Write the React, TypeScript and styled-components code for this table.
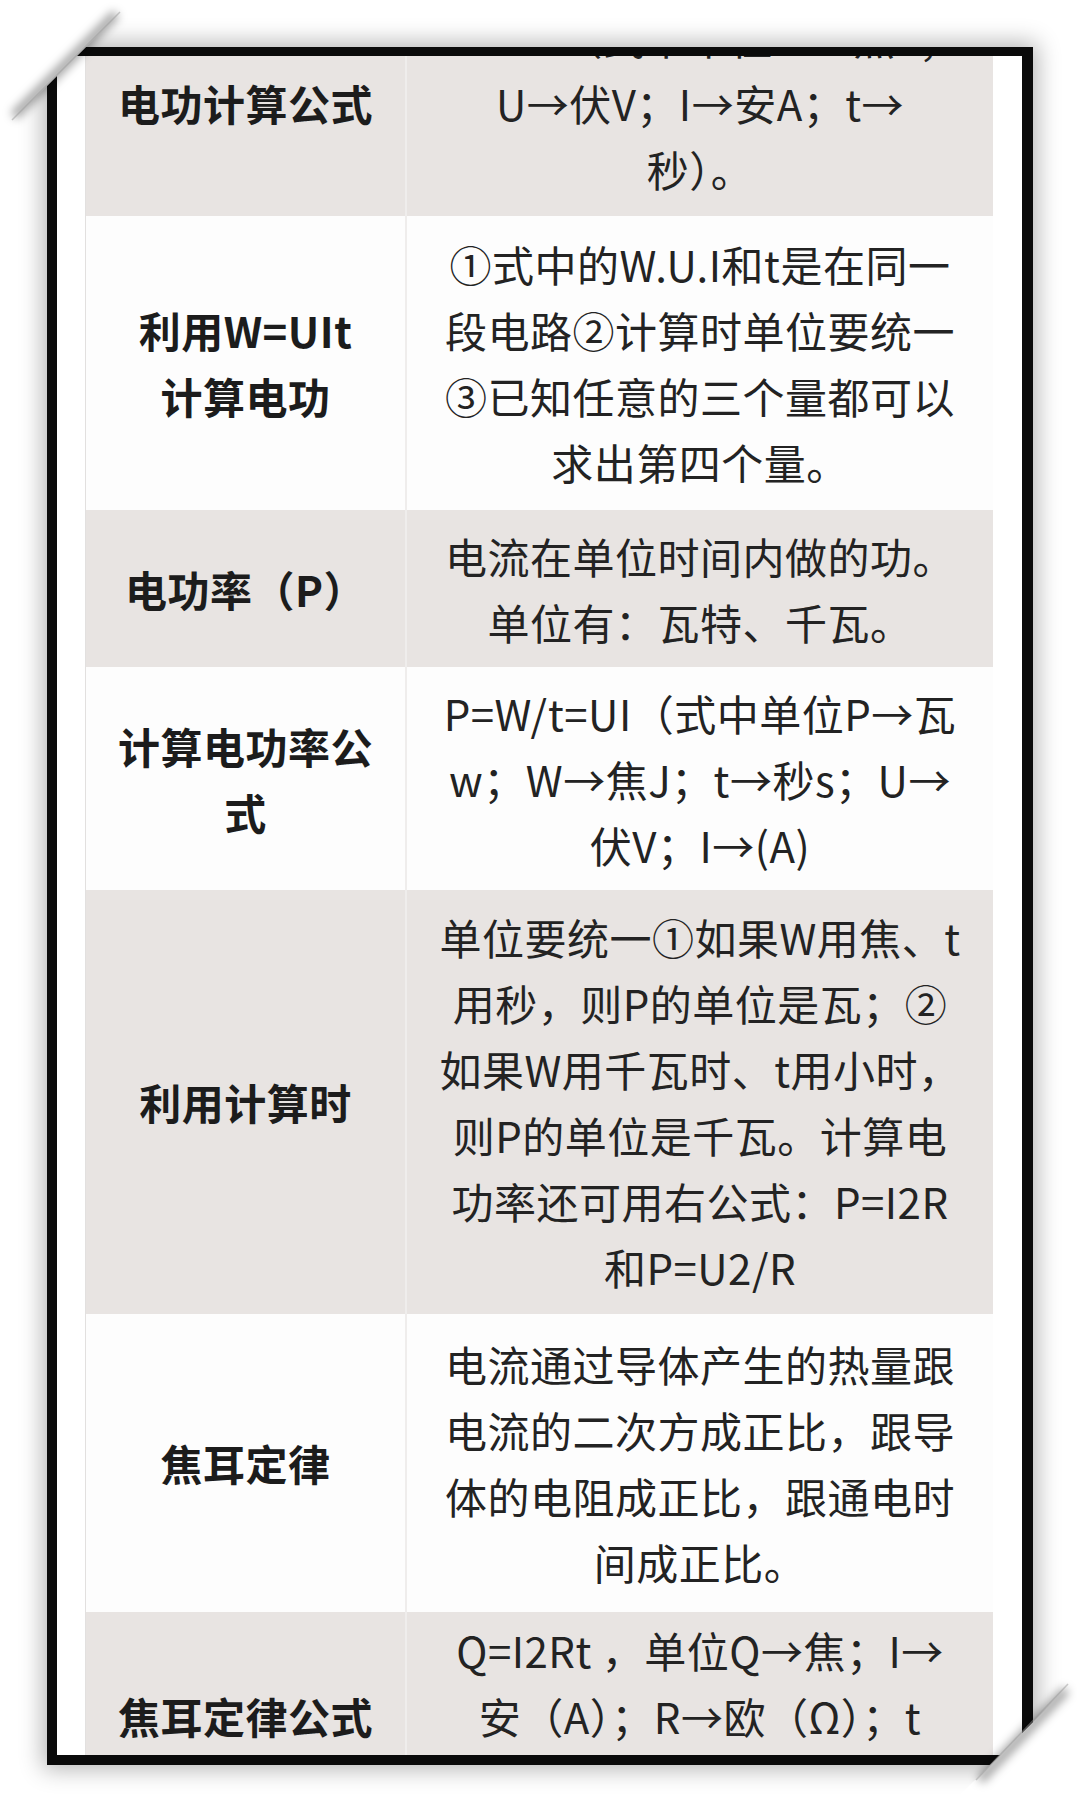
import React from 'react';
import styled, { createGlobalStyle } from 'styled-components';

const GlobalStyle = createGlobalStyle`
  html, body {
    margin: 0;
    padding: 0;
    background: #ffffff;
  }
  body {
    font-family: "Noto Sans CJK SC", "Noto Sans", sans-serif;
    color: #222222;
  }
`;

type Row = {
  head: string[];
  body: string[];
  height: number;
  shaded: boolean;
};

// the screenshot is a crop of a longer table: first and last rows are cut by the frame
const ROWS: Row[] = [
  {
    head: ['电功计算公式'],
    body: ['W=UIt（式中单位W→焦J；', 'U→伏V；I→安A；t→', '秒）。'],
    height: 226,
    shaded: true,
  },
  {
    head: ['利用W=UIt', '计算电功'],
    body: ['①式中的W.U.I和t是在同一', '段电路②计算时单位要统一', '③已知任意的三个量都可以', '求出第四个量。'],
    height: 294,
    shaded: false,
  },
  {
    head: ['电功率（P）'],
    body: ['电流在单位时间内做的功。', '单位有：瓦特、千瓦。'],
    height: 157,
    shaded: true,
  },
  {
    head: ['计算电功率公', '式'],
    body: ['P=W/t=UI（式中单位P→瓦', 'w；W→焦J；t→秒s；U→', '伏V；I→(A)'],
    height: 223,
    shaded: false,
  },
  {
    head: ['利用计算时'],
    body: [
      '单位要统一①如果W用焦、t',
      '用秒，则P的单位是瓦；②',
      '如果W用千瓦时、t用小时，',
      '则P的单位是千瓦。计算电',
      '功率还可用右公式：P=I2R',
      '和P=U2/R',
    ],
    height: 424,
    shaded: true,
  },
  {
    head: ['焦耳定律'],
    body: ['电流通过导体产生的热量跟', '电流的二次方成正比，跟导', '体的电阻成正比，跟通电时', '间成正比。'],
    height: 298,
    shaded: false,
  },
  {
    head: ['焦耳定律公式'],
    body: ['Q=I2Rt ，单位Q→焦；I→', '安（A）；R→欧（Ω）；t', '→秒（s）。'],
    height: 208,
    shaded: true,
  },
];

export default function App() {
  return (
    <>
      <GlobalStyle />
      <Page>
        <Frame>
          <Table>
            {ROWS.map((row, i) => (
              <TableRow key={i} $height={row.height} $shaded={row.shaded}>
                <HeadCell>
                  {row.head.map((line, j) => (
                    <Line key={j}>{line}</Line>
                  ))}
                </HeadCell>
                <BodyCell>
                  {row.body.map((line, j) => (
                    <Line key={j}>{line}</Line>
                  ))}
                </BodyCell>
              </TableRow>
            ))}
          </Table>
        </Frame>

        {/* curled corners of the photo */}
        <CurlTopLeft width="170" height="170" viewBox="0 0 170 170">
          <defs>
            <filter id="tlBlur" x="-50%" y="-50%" width="200%" height="200%">
              <feGaussianBlur stdDeviation="5" />
            </filter>
          </defs>
          <polygon points="0,0 133,0 0,133" fill="#fff" />
          <line x1="116" y1="14" x2="14" y2="116" stroke="#000" strokeOpacity="0.38" strokeWidth="9" filter="url(#tlBlur)" />
          <line x1="120" y1="12" x2="12" y2="120" stroke="#9a9a9a" strokeOpacity="0.5" strokeWidth="1.5" />
        </CurlTopLeft>

        <CurlBottomRight width="140" height="152" viewBox="940 1660 140 152">
          <defs>
            <filter id="brBlur" x="-50%" y="-50%" width="200%" height="200%">
              <feGaussianBlur stdDeviation="5" />
            </filter>
          </defs>
          <polygon points="1080,1675 1080,1812 943,1812" fill="#fff" />
          <line x1="1066" y1="1690" x2="980" y2="1780" stroke="#000" strokeOpacity="0.38" strokeWidth="9" filter="url(#brBlur)" />
          <line x1="1068" y1="1684" x2="976" y2="1780" stroke="#9a9a9a" strokeOpacity="0.5" strokeWidth="1.5" />
        </CurlBottomRight>
      </Page>
    </>
  );
}

const Page = styled.div`
  position: relative;
  width: 1080px;
  height: 1812px;
  overflow: hidden;
  padding: 47px 0 0 47px;
  box-sizing: border-box;
`;

const Frame = styled.div`
  width: 986px;
  height: 1718px;
  box-sizing: border-box;
  border-style: solid;
  border-color: #0a0a0a;
  border-width: 9px 11px 10px 10px;
  background: #ffffff;
  padding: 0 30px 0 28px;
  overflow: hidden;
  box-shadow: 0 0 22px 4px rgba(0, 0, 0, 0.3);
`;

const Table = styled.div`
  display: flex;
  flex-direction: column;
  width: 907px;
  margin-top: -66px;
  border-left: 1px solid #e2e0df;
`;

const TableRow = styled.div<{ $height: number; $shaded: boolean }>`
  display: grid;
  grid-template-columns: 319px 1fr;
  height: ${(p) => p.$height}px;
  flex: none;
  background: ${(p) => (p.$shaded ? '#e8e4e2' : '#fdfdfd')};
`;

const HeadCell = styled.div`
  display: flex;
  flex-direction: column;
  align-items: center;
  justify-content: center;
  text-align: center;
  font-size: 42px;
  line-height: 66px;
  font-weight: 700;
  letter-spacing: 0.5px;
  color: #1c1c1c;
`;

const BodyCell = styled.div`
  display: flex;
  flex-direction: column;
  align-items: center;
  justify-content: center;
  text-align: center;
  font-size: 42px;
  line-height: 66px;
  font-weight: 400;
  letter-spacing: 0.5px;
  color: #232323;
  border-left: 2px solid #efedec;
`;

const Line = styled.span`
  display: block;
  white-space: nowrap;
`;

const CurlTopLeft = styled.svg`
  position: absolute;
  left: 0;
  top: 0;
`;

const CurlBottomRight = styled.svg`
  position: absolute;
  left: 940px;
  top: 1660px;
`;
